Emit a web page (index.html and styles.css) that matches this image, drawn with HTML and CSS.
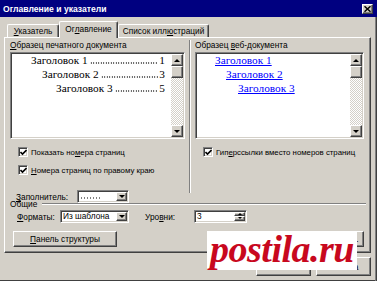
FILE: index.html
```html
<!DOCTYPE html>
<html lang="ru">
<head>
<meta charset="utf-8">
<meta name="viewport" content="initial-scale=1">
<title>Оглавление и указатели</title>

<link rel="stylesheet" href="styles.css">
</head>
<body>
<div class="window">

<div class="titlebar">
    <span class="title">Оглавление и указатели</span>
    <span class="close">
        <svg width="7" height="6" viewBox="0 0 7 6"><path d="M0.5 0.3 L6.5 5.7 M6.5 0.3 L0.5 5.7" stroke="#000" stroke-width="1.5"/></svg>
    </span>
</div>

<div class="tabs">
    <div class="tab tab-index"><u>У</u>казатель</div>
    <div class="tab tab-toc active">Ог<u>л</u>авление</div>
    <div class="tab tab-figures">Список илл<u>ю</u>страций</div>
</div>

<div class="panel">
    <div class="previews">
        <div class="col col-print">
            <div class="label"><u>О</u>бразец печатного документа</div>
            <div class="sample">
                <div class="sample-body">
                    <div class="toc-line lvl1"><span>Заголовок 1</span><span class="dots"></span><span>1</span></div>
                    <div class="toc-line lvl2"><span>Заголовок 2</span><span class="dots"></span><span>3</span></div>
                    <div class="toc-line lvl3"><span>Заголовок 3</span><span class="dots"></span><span>5</span></div>
                </div>
                <div class="sb">
                    <div class="sb-btn"><span class="arr-up"></span></div>
                    <div class="sb-thumb"></div>
                    <div class="sb-track"></div>
                    <div class="sb-btn"><span class="arr-down"></span></div>
                </div>
            </div>

            <div class="check-row first">
                <span class="check"><svg width="7" height="7" viewBox="0 0 7 7"><path d="M0.5 3 L2.5 5 L6.5 1" fill="none" stroke="#000" stroke-width="1.6"/></svg></span>
                <span>Показать но<u>м</u>ера страниц</span>
            </div>
            <div class="check-row">
                <span class="check"><svg width="7" height="7" viewBox="0 0 7 7"><path d="M0.5 3 L2.5 5 L6.5 1" fill="none" stroke="#000" stroke-width="1.6"/></svg></span>
                <span><u>Н</u>омера страниц по правому краю</span>
            </div>

            <div class="fill-row">
                <span class="fill-label"><u>З</u>аполнитель:</span>
                <div class="combo combo-fill">
                    <span class="combo-text"><span class="leader"></span></span>
                    <span class="drop"><span class="arr-down"></span></span>
                </div>
            </div>
        </div>

        <div class="vsep"></div>

        <div class="col col-web">
            <div class="label">Образец <u>в</u>еб-документа</div>
            <div class="sample sample-web">
                <div class="web-body">
                    <div class="web-line lvl1"><a href="#">Заголовок 1</a></div>
                    <div class="web-line lvl2"><a href="#">Заголовок 2</a></div>
                    <div class="web-line lvl3"><a href="#">Заголовок 3</a></div>
                </div>
                <div class="sb">
                    <div class="sb-btn"><span class="arr-up"></span></div>
                    <div class="sb-thumb"></div>
                    <div class="sb-track"></div>
                    <div class="sb-btn"><span class="arr-down"></span></div>
                </div>
            </div>

            <div class="check-row first">
                <span class="check"><svg width="7" height="7" viewBox="0 0 7 7"><path d="M0.5 3 L2.5 5 L6.5 1" fill="none" stroke="#000" stroke-width="1.6"/></svg></span>
                <span>Гип<u>е</u>рссылки вместо номеров страниц</span>
            </div>
        </div>
    </div>

    <div class="group-title">
        <span>Общие</span>
        <span class="rule"></span>
    </div>

    <div class="formats">
        <span class="formats-label"><u>Ф</u>орматы:</span>
        <div class="combo combo-formats">
            <span class="combo-text">Из шаблона</span>
            <span class="drop"><span class="arr-down"></span></span>
        </div>
        <span class="levels-label">Уро<u>в</u>ни:</span>
        <div class="spin">
            <span class="spin-text">3</span>
            <span class="spin-btns">
                <span class="spin-btn"><span class="arr-up"></span></span>
                <span class="spin-btn"><span class="arr-down"></span></span>
            </span>
        </div>
    </div>

    <div class="actions">
        <div class="btn btn-outline"><u>П</u>анель структуры</div>
        <div class="btn btn-options">Параметры...</div>
        <div class="btn btn-modify">Изменить...</div>
    </div>
</div>

<div class="dialog-buttons">
    <div class="btn btn-dlg">ОК</div>
    <div class="btn btn-dlg">Отмена</div>
</div>

<div class="watermark">postila.ru</div>

</div>
</body>
</html>
```

FILE: styles.css
```css
body {
    margin: 0;
    font-family: "Liberation Sans", Arial, sans-serif;
    font-size: 8.3px;
    color: #000;
}

u { text-decoration: underline; text-underline-offset: 1px; }

.window {
    position: relative;
    width: 377px;
    height: 281px;
    overflow: hidden;
    background: #d4d0c8;
    box-shadow: inset -1px 0 #404040, inset -2px 0 #808080, inset 0 -1px #404040;
}

/* raised / sunken 3d edges */
.close, .sb-btn, .sb-thumb, .drop, .spin-btn, .btn {
    box-sizing: border-box;
    background: #d4d0c8;
    border: 1px solid;
    border-color: #fff #404040 #404040 #fff;
    box-shadow: inset -1px -1px #808080;
}

.sample, .check, .combo, .spin {
    box-sizing: border-box;
    background: #fff;
    border: 1px solid;
    border-color: #808080 #fff #fff #808080;
    box-shadow: inset 1px 1px #404040, inset -1px -1px #d4d0c8;
}

.titlebar {
    height: 17px;
    background: #000080;
    color: #fff;
    display: flex;
    align-items: center;
    justify-content: space-between;
    padding: 0 4px 0 3px;
    font-weight: bold;
    font-size: 8.6px;
}

.close {
    width: 11px;
    height: 10px;
    display: flex;
    align-items: center;
    justify-content: center;
}
.close svg { display: block; }

.tabs {
    position: relative;
    z-index: 1;
    height: 20px;
    display: flex;
    align-items: flex-end;
    padding-left: 7px;
}

.tab {
    box-sizing: border-box;
    height: 13px;
    border: 1px solid #fff;
    border-bottom: none;
    border-right-color: #404040;
    border-radius: 2px 2px 0 0;
    box-shadow: inset -1px 0 #808080;
    padding-top: 1px;
    line-height: 10px;
    text-align: center;
    background: #d4d0c8;
}
.tab-index   { width: 52px; }
.tab-toc     { width: 59px; }
.tab-figures { width: 91px; }

.tab.active {
    height: 17px;
    margin-bottom: -1px;
    padding-top: 2px;
}

.panel {
    box-sizing: border-box;
    width: 367px;
    height: 216px;
    margin-left: 4px;
    border: 1px solid;
    border-color: #fff #404040 #404040 #fff;
    box-shadow: inset -1px -1px #808080;
}

.previews {
    display: flex;
    height: 161px;
}

.col-print { width: 180px; padding-left: 5px; box-sizing: border-box; }
.col-web   { padding-left: 4px; }

.label {
    margin: 2px 0 2px;
    height: 10px;
    line-height: 10px;
}

.sample {
    display: flex;
    width: 175px;
    height: 87px;
}
.sample-web { width: 169px; }

.sample-body, .web-body {
    flex: 1;
    padding: 0;
    font-family: "Liberation Serif", "Times New Roman", serif;
    font-size: 11.3px;
    line-height: 14px;
    overflow: hidden;
}

.toc-line {
    display: flex;
    white-space: nowrap;
    padding-right: 6px;
}
.toc-line.lvl1 { padding-left: 20px; }
.toc-line.lvl2 { padding-left: 31px; }
.toc-line.lvl3 { padding-left: 45px; }

.dots {
    flex: 1;
    min-width: 0;
    margin: 0 1px 3px 2px;
    background-image: radial-gradient(circle, #333 0.55px, transparent 0.75px);
    background-size: 2.5px 2px;
    background-repeat: repeat-x;
    background-position: left bottom;
}

.web-line.lvl1 { padding-left: 19px; }
.web-line.lvl2 { padding-left: 30px; }
.web-line.lvl3 { padding-left: 42px; }
.web-line a { color: #0000ff; text-decoration: underline; }

.sb {
    width: 12px;
    margin: 1px 1px 1px 0;
    display: flex;
    flex-direction: column;
}
.sb-btn, .sb-thumb {
    height: 12px;
    display: flex;
    align-items: center;
    justify-content: center;
}
.sb-track {
    flex: 1;
    background-color: #ece9e4;
    background-image: repeating-conic-gradient(#fff 0 25%, #d4d0c8 0 50%);
    background-size: 2px 2px;
}

.arr-up, .arr-down {
    width: 0;
    height: 0;
    border-left: 3px solid transparent;
    border-right: 3px solid transparent;
}
.arr-up   { border-bottom: 3px solid #000; }
.arr-down { border-top: 3px solid #000; }

.check-row {
    display: flex;
    align-items: center;
    gap: 3px;
    height: 10px;
    margin: 8px 0 0 8px;
    white-space: nowrap;
    font-size: 7.8px;
}

.check {
    width: 10px;
    height: 10px;
    display: flex;
    align-items: center;
    justify-content: center;
}
.check svg { display: block; }

.fill-row {
    display: flex;
    align-items: center;
    height: 13px;
    margin: 15px 0 0 6px;
}
.fill-label { width: 61px; }

.combo {
    display: flex;
    align-items: stretch;
    height: 13px;
}
.combo-fill    { width: 52px; }
.combo-formats { width: 69px; }

.combo-text {
    flex: 1;
    display: flex;
    align-items: center;
    padding-left: 2px;
    line-height: 11px;
    white-space: nowrap;
    overflow: hidden;
}

.leader {
    width: 22px;
    height: 2px;
    margin-top: 3px;
    background-image: radial-gradient(circle, #808080 0.5px, transparent 0.7px);
    background-size: 3px 2px;
}

.drop {
    width: 11px;
    margin: 1px;
    display: flex;
    align-items: center;
    justify-content: center;
}

.vsep {
    width: 0;
    height: 153px;
    margin: 2px 0 0 4px;
    border-left: 1px solid #808080;
    border-right: 1px solid #fff;
}

.group-title {
    display: flex;
    align-items: center;
    height: 10px;
    padding-left: 5px;
}
.rule {
    flex: 1;
    margin: 0 4px 0 5px;
    border-top: 1px solid #808080;
    border-bottom: 1px solid #fff;
}

.formats {
    display: flex;
    align-items: center;
    height: 13px;
    margin-top: 1px;
    padding-left: 12px;
}
.formats-label { width: 43px; }
.levels-label  { width: 49px; margin-left: 16px; }

.spin {
    display: flex;
    width: 53px;
    height: 13px;
    margin-top: -1px;
}
.spin-text {
    flex: 1;
    padding-left: 2px;
    line-height: 11px;
}
.spin-btns {
    display: flex;
    flex-direction: column;
    width: 11px;
    margin: 1px;
}
.spin-btn {
    flex: 1;
    display: flex;
    align-items: center;
    justify-content: center;
}
.spin-btn .arr-up   { border-width: 0 2px 2px; }
.spin-btn .arr-down { border-width: 2px 2px 0; }

.actions {
    display: flex;
    margin-top: 8px;
    padding-left: 8px;
}

.btn {
    display: flex;
    align-items: center;
    justify-content: center;
    height: 16px;
    white-space: nowrap;
}
.btn-outline { width: 104px; }
.btn-options { width: 71px; margin-left: 115px; }
.btn-modify  { width: 55px; margin-left: 6px; }

.dialog-buttons {
    display: flex;
    justify-content: flex-end;
    gap: 5px;
    margin-top: 4px;
    padding-right: 6px;
}
.btn-dlg { width: 55px; height: 19px; }

.watermark {
    position: absolute;
    left: 207px;
    top: 231px;
    width: 150px;
    height: 39px;
    background: #fff;
    color: #c8081e;
    font-family: "Liberation Serif", "Times New Roman", serif;
    font-style: italic;
    font-weight: bold;
    font-size: 38px;
    line-height: 37px;
    text-align: center;
    letter-spacing: -0.5px;
}
```
